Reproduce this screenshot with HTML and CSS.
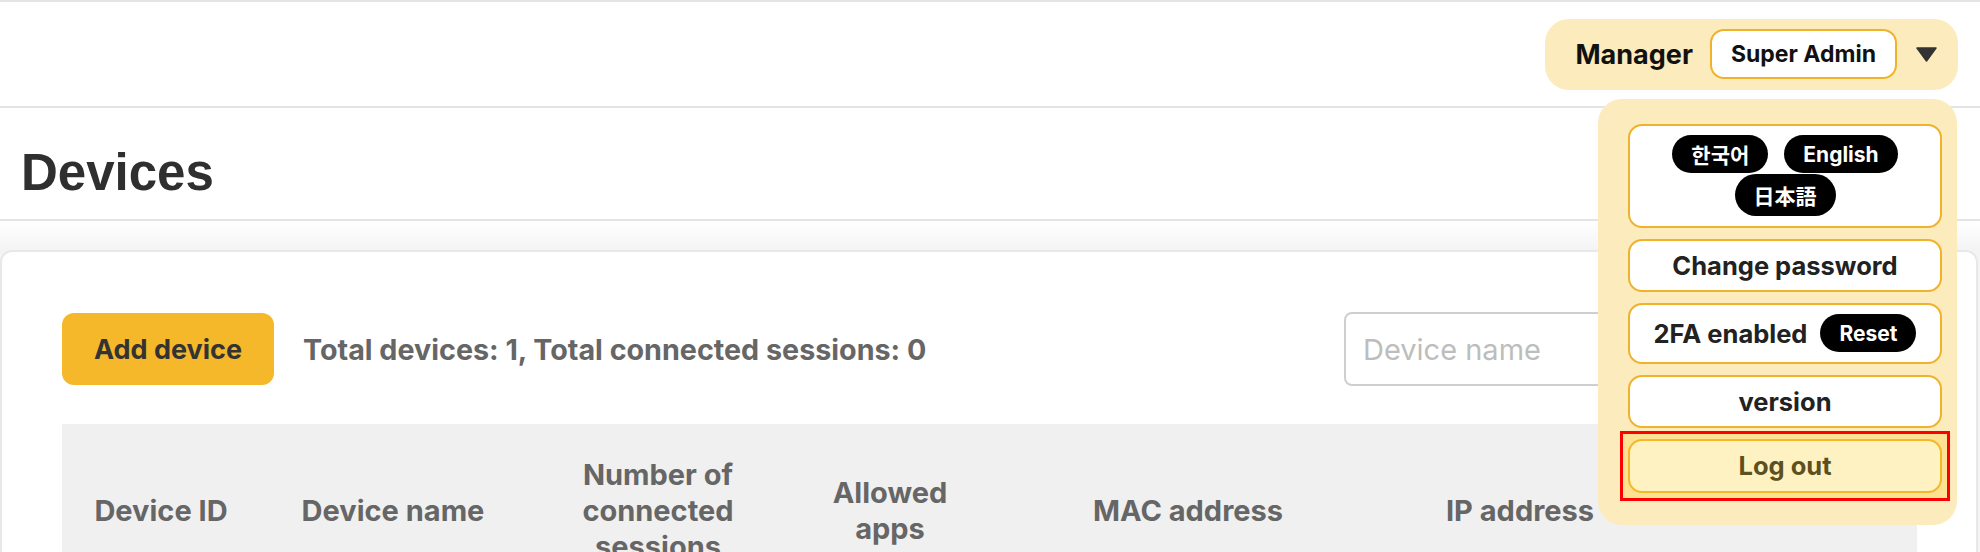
FILE: index.html
```html
<!DOCTYPE html>
<html lang="en">
<head>
<meta charset="utf-8">
<title>Devices</title>
<link rel="stylesheet" href="styles.css">
</head>
<body>
<div class="topline"></div>
<header class="header">
  <div class="user-menu">
    <span class="role">Manager</span>
    <span class="badge">Super Admin</span>
    <svg class="caret" width="21" height="15" viewBox="0 0 21 15" aria-hidden="true"><path d="M1 1 H20 L10.5 14 Z" fill="#333" stroke="#333" stroke-width="1.5" stroke-linejoin="round"/></svg>
    <div class="dropdown">
      <div class="item lang">
        <span class="chip" lang="ko">한국어</span>
        <span class="chip">English</span>
        <span class="chip chip-ja" lang="ja">日本語</span>
      </div>
      <div class="item">Change password</div>
      <div class="item twofa">2FA enabled <span class="chip">Reset</span></div>
      <div class="item">version</div>
      <div class="item logout">Log out</div>
    </div>
  </div>
</header>
<section class="title-bar"><h1 class="title">Devices</h1></section>
<main class="main">
  <div class="card">
    <div class="toolbar">
      <button class="btn-primary">Add device</button>
      <span class="summary">Total devices: 1, Total connected sessions: 0</span>
      <input class="search" type="text" placeholder="Device name">
    </div>
    <div class="table-head">
      <div class="th">Device ID</div>
      <div class="th">Device name</div>
      <div class="th">Number of connected sessions</div>
      <div class="th">Allowed apps</div>
      <div class="th">MAC address</div>
      <div class="th">IP address</div>
      <div class="th"></div>
    </div>
  </div>
</main>
</body>
</html>
```
FILE: styles.css
```css
body {
  margin: 0;
  font-family: Inter, "Noto Sans CJK KR", sans-serif;
  background: #fff;
  color: #333;
  overflow: hidden;
}

.topline {
  height: 2px;
  background: #e4e4e4;
}

.header {
  height: 104px;
  border-bottom: 2px solid #e4e4e4;
  display: flex;
  justify-content: flex-end;
  align-items: center;
  padding-right: 22px;
}

.user-menu {
  position: relative;
  display: flex;
  align-items: center;
  height: 71px;
  padding: 0 21px 0 30px;
  background: #fcebbd;
  border-radius: 24px;
}

.role {
  font-size: 27px;
  font-weight: 700;
  color: #111;
  margin-right: 17px;
}

.badge {
  height: 50px;
  box-sizing: border-box;
  padding: 0 19px;
  border: 2px solid #f0b22a;
  border-radius: 14px;
  background: #fff;
  font-size: 23px;
  font-weight: 700;
  color: #111;
  display: flex;
  align-items: center;
  margin-right: 19px;
}

.caret {
  display: block;
}

.dropdown {
  position: absolute;
  top: 80px;
  right: 1px;
  width: 359px;
  box-sizing: border-box;
  padding: 25px 15px 32px 30px;
  background: #fcebbd;
  border-radius: 24px;
  display: flex;
  flex-direction: column;
  gap: 11px;
  z-index: 10;
}

.item {
  position: relative;
  height: 53px;
  box-sizing: border-box;
  border: 2px solid #f0b22a;
  border-radius: 14px;
  background: #fff;
  display: flex;
  align-items: center;
  justify-content: center;
  font-size: 25.5px;
  font-weight: 700;
  color: #222;
}

.lang {
  height: 104px;
  flex-wrap: wrap;
  align-content: center;
  column-gap: 16px;
  row-gap: 1px;
  padding: 0 20px;
}

.chip {
  display: inline-flex;
  align-items: center;
  height: 38px;
  padding: 0 19px;
  border-radius: 19px;
  background: #000;
  color: #fff;
  font-size: 21px;
  font-weight: 700;
}

.chip[lang="ko"] {
  font-family: "Noto Sans CJK KR", sans-serif;
}

.chip-ja {
  font-family: "Noto Sans CJK JP", sans-serif;
  height: 42px;
  border-radius: 21px;
}

.twofa {
  height: 61px;
  gap: 13px;
}

.logout {
  height: 54px;
}

.logout::after {
  content: "";
  position: absolute;
  inset: -10px;
  border: 3px solid #ff0000;
  background: rgba(250, 205, 30, 0.27);
  pointer-events: none;
}

.title-bar {
  height: 113px;
  box-sizing: border-box;
  padding: 36px 0 19px 21px;
  border-bottom: 2px solid #e4e4e4;
}

.title {
  margin: 0;
  font-family: "Liberation Sans", Arial, sans-serif;
  font-size: 51px;
  line-height: 58px;
  font-weight: 700;
  color: #2f2f2f;
}

.main {
  padding: 29px 2px 0 0;
  background: linear-gradient(to bottom, #fff 0, #f4f4f4 29px, #f4f4f4 100%);
}

.card {
  background: #fff;
  border: 2px solid #e8e8e8;
  border-radius: 12px;
  padding: 60px 59px 0 60px;
}

.toolbar {
  display: flex;
  align-items: center;
  height: 74px;
  margin-bottom: 38px;
}

.btn-primary {
  width: 212px;
  height: 72px;
  border: none;
  border-radius: 12px;
  background: #f5b82a;
  font-family: Inter, sans-serif;
  font-size: 27px;
  font-weight: 700;
  color: #333;
  padding: 0;
}

.summary {
  margin-left: 29px;
  font-size: 28.7px;
  font-weight: 700;
  color: #666;
}

.search {
  margin-left: auto;
  width: 573px;
  height: 74px;
  box-sizing: border-box;
  border: 2px solid #cfcfcf;
  border-radius: 8px;
  padding: 0 17px;
  font-family: Inter, sans-serif;
  font-size: 29px;
  color: #333;
  outline: none;
}

.search::placeholder {
  color: #bdbdbd;
}

.table-head {
  display: grid;
  grid-template-columns: 198px 266px 264px 200px 396px 268px 1fr;
  background: #f0f0f0;
}

.th {
  padding: 33px 16px 25px;
  display: flex;
  align-items: center;
  justify-content: center;
  text-align: center;
  font-size: 29px;
  line-height: 36px;
  font-weight: 700;
  color: #666;
}
```
